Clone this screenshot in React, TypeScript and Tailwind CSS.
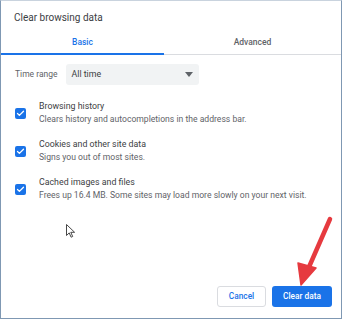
import { Check } from 'lucide-react'

const items = [
  { title: 'Browsing history', desc: 'Clears history and autocompletions in the address bar.' },
  { title: 'Cookies and other site data', desc: 'Signs you out of most sites.' },
  { title: 'Cached images and files', desc: 'Frees up 16.4 MB. Some sites may load more slowly on your next visit.' },
]

export default function App() {
  return (
    <div
      className="relative w-[342px] h-[319px] bg-white border-x border-b border-[#7f98b3] border-t-[#c9d3de] border-t flex flex-col overflow-hidden"
      style={{ fontFamily: 'Roboto, "Liberation Sans", sans-serif' }}
    >
      <div className="px-[13px] pt-[10px] h-[29px] text-[10px] leading-[14px] text-[#3c4043]">Clear browsing data</div>

      {/* tabs */}
      <div className="flex h-[25px] border-b border-[#dadce0] text-[8.5px] font-medium">
        <div className="w-[163px] -mb-px pt-[1px] flex items-center justify-center text-[#1a73e8] border-b-2 border-[#1a73e8]">
          Basic
        </div>
        <div className="flex-1 pt-[1px] flex items-center justify-center text-[#5f6368]">Advanced</div>
      </div>

      {/* time range */}
      <div className="flex items-center mt-[9px] px-[14px] gap-[8px]">
        <span className="text-[8.5px] text-[#5f6368]">Time range</span>
        <div className="w-[133px] h-[21px] bg-[#f1f3f4] rounded-[3px] flex items-center justify-between pl-[6px] pr-[6px] text-[8.8px] text-[#3c4043]">
          <span>All time</span>
          <svg width="8" height="5" viewBox="0 0 8 5">
            <path d="M0 0h8L4 5z" fill="#5f6368" />
          </svg>
        </div>
      </div>

      {/* checkboxes */}
      <div className="flex flex-col mt-[15px] gap-[12px]">
        {items.map((it) => (
          <div key={it.title} className="flex items-center pl-[14px]">
            <div className="w-[11px] h-[11px] rounded-[2px] bg-[#1a73e8] flex items-center justify-center">
              <Check className="w-[9px] h-[9px] text-white" strokeWidth={3.5} />
            </div>
            <div className="ml-[13px] flex flex-col">
              <span className="text-[8.8px] leading-[13px] text-[#3c4043]">{it.title}</span>
              <span className="text-[8.6px] leading-[13px] text-[#5f6368]">{it.desc}</span>
            </div>
          </div>
        ))}
      </div>

      {/* footer */}
      <div className="mt-auto flex justify-end gap-[6px] pr-[9px] pb-[11px]">
        <button className="w-[49px] h-[21px] rounded-[3px] border border-[#dadce0] bg-white text-[8.3px] font-medium text-[#1a73e8]">
          Cancel
        </button>
        <button className="w-[60px] h-[21px] rounded-[3px] bg-[#1a73e8] text-[8.3px] font-medium text-white">
          Clear data
        </button>
      </div>

      {/* mouse cursor */}
      <svg className="absolute left-[65px] top-[223px]" width="10" height="14" viewBox="0 0 10 14">
        <path d="M0.5 0.5v11l2.7-2.6 1.9 4.3 1.6-0.7-1.9-4.2h3.8z" fill="white" stroke="#333" strokeWidth="0.9" strokeLinejoin="round" />
      </svg>

      {/* red annotation arrow */}
      <svg className="absolute left-0 top-0 pointer-events-none" width="342" height="319" viewBox="0 0 342 319">
        <line x1="329" y1="218" x2="308" y2="266" stroke="#e63a3f" strokeWidth="4.5" strokeLinecap="round" />
        <path d="M297 262l18 5-15 17z" fill="#e63a3f" stroke="#e63a3f" strokeWidth="1.5" strokeLinejoin="round" />
      </svg>
    </div>
  )
}
